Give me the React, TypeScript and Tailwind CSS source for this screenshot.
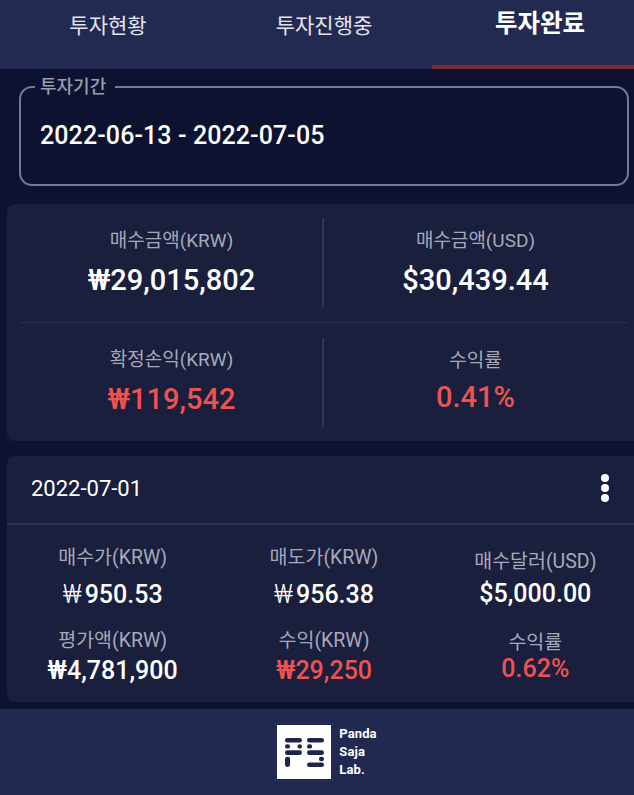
const fontStack = "font-['Roboto','Noto_Sans_CJK_KR',sans-serif]";

function Stat({ label, value, won, red, labelClass, valueClass }: { label: string; value: string; won?: string; red?: boolean; labelClass?: string; valueClass?: string }) {
  return (
    <div className="flex flex-col items-center">
      <div className={`text-[#a6a9bb] ${labelClass ?? ''}`}>{label}</div>
      <div className={`font-medium ${red ? 'text-[#ef5350]' : 'text-white'} ${valueClass ?? ''}`}>
        {won && <span className="mr-[3px] font-light">{won}</span>}
        {value}
      </div>
    </div>
  );
}

function Logo() {
  return (
    <div className="flex items-center gap-[8px] pl-[6px]">
      <div className="flex h-[54px] w-[54px] items-center justify-center bg-white">
        <svg width="39" height="29" viewBox="0 0 115 85" fill="#1f2547">
          {/* P */}
          <rect x="0" y="0" width="50" height="13" rx="6.5" />
          <rect x="0" y="18" width="15" height="13" rx="6.5" />
          <rect x="37" y="18" width="13" height="13" rx="6.5" />
          <rect x="0" y="36" width="50" height="14" rx="7" />
          <rect x="0" y="55" width="15" height="30" rx="7" />
          {/* S */}
          <rect x="65" y="0" width="50" height="13" rx="6.5" />
          <rect x="65" y="18" width="15" height="13" rx="6.5" />
          <rect x="65" y="36" width="50" height="14" rx="7" />
          <rect x="100" y="55" width="15" height="13" rx="6.5" />
          <rect x="65" y="72" width="50" height="13" rx="6.5" />
        </svg>
      </div>
      <div className="text-[13px] leading-[18px] font-bold tracking-[0.1px] text-white">
        <div>Panda</div>
        <div>Saja</div>
        <div>Lab.</div>
      </div>
    </div>
  );
}

export default function App() {
  return (
    <div className={`h-[795px] w-[634px] overflow-hidden bg-[#0e1231] ${fontStack}`}>
      <div className="flex h-[795px] w-[648px] flex-col">
        {/* Tabs */}
        <div className="grid h-[69px] grid-cols-3 bg-[#232a52]">
          <div className="pt-[12px] text-center text-[21px] leading-7 text-[#e4e5ec]">투자현황</div>
          <div className="pt-[12px] text-center text-[21px] leading-7 text-[#e4e5ec]">투자진행중</div>
          <div className="border-b-[4px] border-[#7c2a36] pt-[10px] text-center text-[24.5px] leading-7 font-bold text-white">투자완료</div>
        </div>

        {/* Period */}
        <fieldset className="mx-[19px] mt-[9px] h-[108px] w-[610px] rounded-[13px] border-2 border-[#757a90] pl-[19px]">
          <legend className="ml-[-5px] pr-[9px] pl-[5px] text-[18px] leading-[18px] font-medium text-[#9a9dae]">투자기간</legend>
          <div className="mt-[24px] text-[25px] leading-8 font-medium tracking-[0.1px] text-white">2022-06-13 - 2022-07-05</div>
        </fieldset>

        {/* Summary */}
        <div className="mt-[18px] ml-[7px] h-[237px] w-[634px] rounded-[8px] bg-[#1a1f3d] p-[14px]">
          <div className="grid h-[89px] grid-cols-[303px_1fr]">
            <div className="border-r-2 border-[#2f3454] pt-[11px]">
              <Stat label="매수금액(KRW)" value="₩29,015,802" labelClass="text-[19px] leading-6" valueClass="mt-[9px] text-[29px] leading-9" />
            </div>
            <div className="pt-[11px]">
              <Stat label="매수금액(USD)" value="$30,439.44" labelClass="text-[19px] leading-6" valueClass="mt-[9px] text-[29px] leading-9" />
            </div>
          </div>
          <div className="my-[15px] h-px bg-[#2b3050]" />
          <div className="grid h-[89px] grid-cols-[303px_1fr]">
            <div className="border-r-2 border-[#2f3454] pt-[10px]">
              <Stat label="확정손익(KRW)" value="₩119,542" red labelClass="text-[19px] leading-6" valueClass="mt-[9px] text-[29px] leading-9" />
            </div>
            <div className="pt-[11px]">
              <Stat label="수익률" value="0.41%" red labelClass="text-[19px] leading-6" valueClass="mt-[6px] text-[29px] leading-9" />
            </div>
          </div>
        </div>

        {/* Trade */}
        <div className="mt-[15px] ml-[7px] h-[246px] w-[634px] rounded-[8px] bg-[#1a1f3d]">
          <div className="flex h-[69px] items-center justify-between border-b-2 border-[#2b3050] pr-[32px] pb-[2px] pl-[24px]">
            <span className="text-[22px] text-white">2022-07-01</span>
            <span className="mb-[2px] flex flex-col gap-[2px]">
              <span className="h-[8px] w-[8px] rounded-full bg-white" />
              <span className="h-[8px] w-[8px] rounded-full bg-white" />
              <span className="h-[8px] w-[8px] rounded-full bg-white" />
            </span>
          </div>
          <div className="grid grid-cols-3 pt-[21px]">
            <Stat label="매수가(KRW)" won="₩" value="950.53" labelClass="text-[19.5px] leading-6" valueClass="mt-[9px] text-[25px] leading-8" />
            <Stat label="매도가(KRW)" won="₩" value="956.38" labelClass="text-[19.5px] leading-6" valueClass="mt-[9px] text-[25px] leading-8" />
            <Stat label="매수달러(USD)" value="$5,000.00" labelClass="mt-[4px] text-[19.5px] leading-6" valueClass="mt-[4px] text-[25px] leading-8" />
            <Stat label="평가액(KRW)" value="₩4,781,900" labelClass="mt-[18px] text-[19.5px] leading-6" valueClass="mt-[2px] text-[25px] leading-8" />
            <Stat label="수익(KRW)" value="₩29,250" red labelClass="mt-[18px] text-[19.5px] leading-6" valueClass="mt-[2px] text-[25px] leading-8" />
            <Stat label="수익률" value="0.62%" red labelClass="mt-[20px] text-[19.5px] leading-6" valueClass="mt-[-2px] text-[25px] leading-8" />
          </div>
        </div>

        {/* Footer */}
        <div className="mt-[7px] flex flex-1 items-center justify-center bg-[#222950]">
          <Logo />
        </div>
      </div>
    </div>
  );
}
